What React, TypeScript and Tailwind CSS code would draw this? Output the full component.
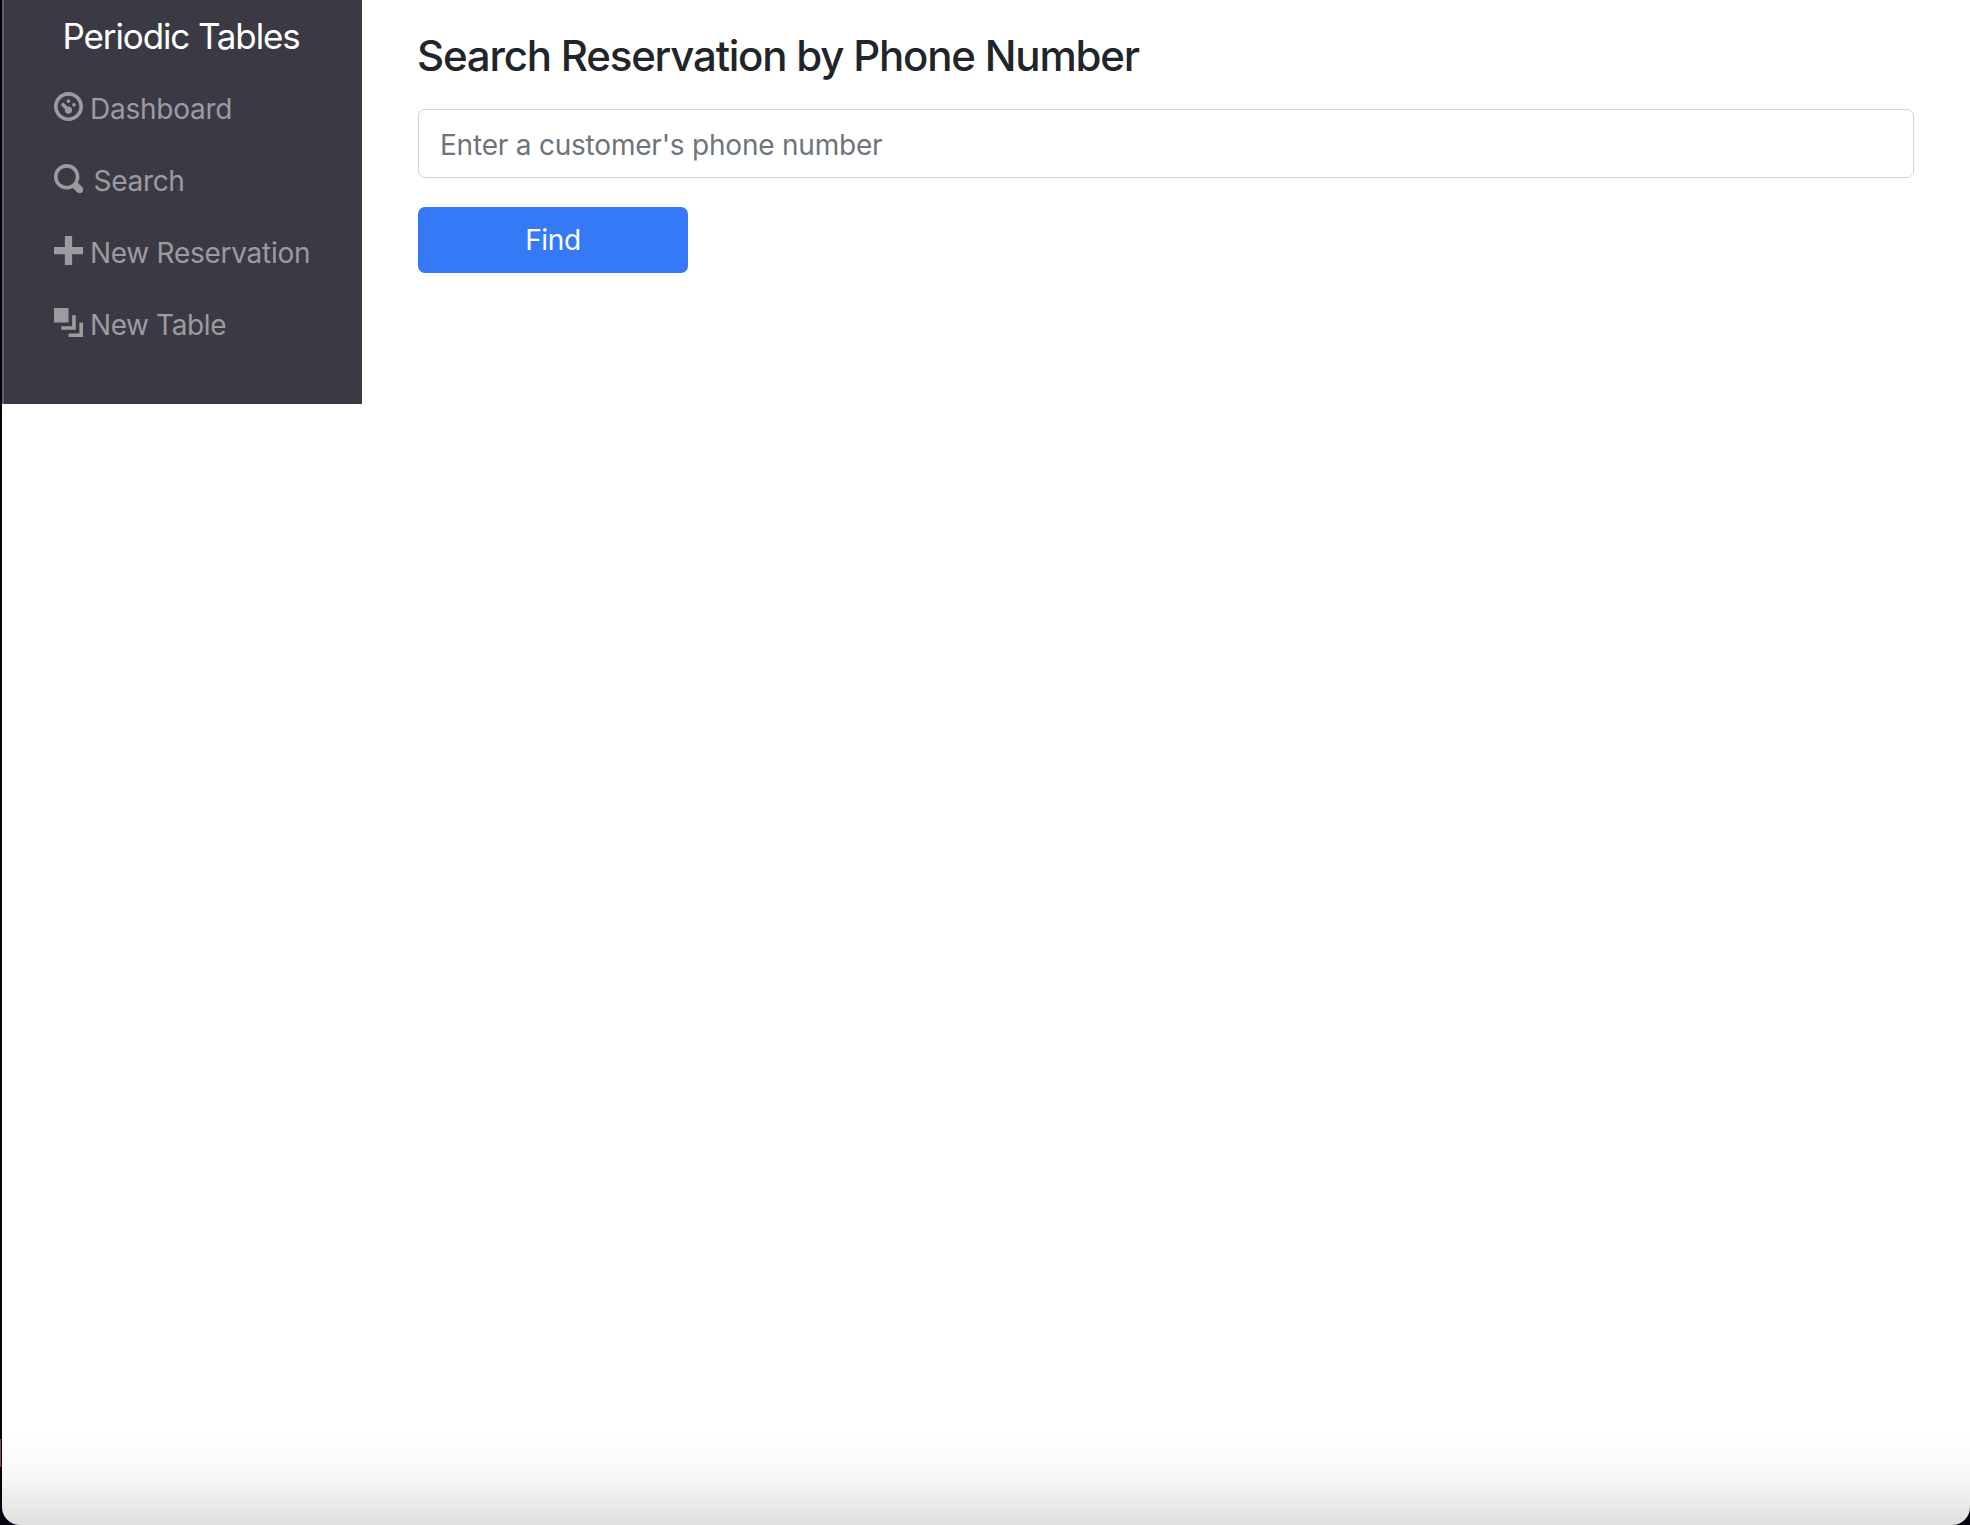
const navItems = [
  {
    label: 'Dashboard',
    text: 'ml-[7px] tracking-[-0.24px]',
    path: 'M4 0c-2.2 0-4 1.8-4 4s1.8 4 4 4 4-1.8 4-4-1.8-4-4-4zm0 1c1.66 0 3 1.34 3 3s-1.34 3-3 3-3-1.34-3-3 1.34-3 3-3zm0 1c-.28 0-.5.22-.5.5s.22.5.5.5.5-.22.5-.5-.22-.5-.5-.5zm-1.66 1a.5.5 0 0 0-.19.84l.91.91c-.02.08-.06.16-.06.25 0 .55.45 1 1 1s1-.45 1-1-.45-1-1-1c-.09 0-.17.04-.25.06l-.91-.91a.5.5 0 0 0-.44-.16.5.5 0 0 0-.06 0zm3.16 0c-.28 0-.5.22-.5.5s.22.5.5.5.5-.22.5-.5-.22-.5-.5-.5z',
  },
  {
    label: 'Search',
    text: 'ml-[10.5px] tracking-[-0.3px]',
    path: 'M3.5 0c-1.93 0-3.5 1.57-3.5 3.5s1.57 3.5 3.5 3.5c.59 0 1.17-.14 1.66-.41a1 1 0 0 0 .13.13l1 1a1.02 1.02 0 1 0 1.44-1.44l-1-1a1 1 0 0 0-.16-.13c.27-.49.44-1.06.44-1.66 0-1.93-1.55-3.5-3.5-3.5zm0 1c1.39 0 2.5 1.11 2.5 2.5 0 .66-.24 1.27-.66 1.72l-.03.03a1 1 0 0 0-.13.13c-.44.4-1.04.63-1.69.63-1.39 0-2.5-1.11-2.5-2.5s1.11-2.5 2.5-2.5z',
  },
  {
    label: 'New Reservation',
    text: 'ml-[7px] tracking-[-0.27px]',
    path: 'M3 0v3h-3v2h3v3h2v-3h3v-2h-3v-3h-2z',
  },
  {
    label: 'New Table',
    text: 'ml-[7px] tracking-[-0.4px]',
    path: 'M0 0v4h4v-4h-4zm5 2v3h-3v1h4v-4h-1zm2 2v3h-3v1h4v-4h-1z',
  },
];

function Sidebar() {
  return (
    <nav className="h-[404px] w-[360px] shrink-0 border-l-2 border-[#5f5e66] bg-[#3b3a44]">
      <div className="flex h-[72px] items-center pl-[58.5px] text-[35px] tracking-[-1.12px] whitespace-nowrap text-white">
        Periodic Tables
      </div>
      <ul className="text-[28px] leading-[72px] text-[#9b9ca0]">
        {navItems.map((item) => (
          <li key={item.label} className="flex h-[72px] items-center pl-[50px] whitespace-nowrap">
            <svg viewBox="0 0 8 8" className="-mt-[3px] size-[29px] shrink-0 fill-current">
              <path d={item.path} />
            </svg>
            <span className={`pt-[2px] ${item.text}`}>{item.label}</span>
          </li>
        ))}
      </ul>
    </nav>
  );
}

export default function App() {
  return (
    <div className="flex h-[1525px] w-[1970px] overflow-hidden bg-[#07030f] font-[Inter,sans-serif]">
      <div className="w-px shrink-0 pt-[1439px]">
        <div className="h-[28px] bg-[#8a4a4c]" />
      </div>
      <div className="ml-px flex h-full flex-1 items-start overflow-hidden rounded-b-[18px] bg-white bg-linear-to-b from-white from-[1430px] via-[#f8f8f8] via-[1475px] to-[#e0e0e0]">
        <Sidebar />
        <main className="flex-1 pr-[56px] pl-[56px]">
          <h1 className="mt-[30px] -ml-px h-[51px] text-[42px] leading-[52px] font-medium tracking-[-1.2px] whitespace-nowrap text-[#212529]">
            Search Reservation by Phone Number
          </h1>
          <form className="mt-[28px]">
            <input
              type="text"
              placeholder="Enter a customer's phone number"
              className="block h-[69px] w-full rounded-[7px] border border-[#ced4da] bg-white px-[21px] pt-[2px] text-[28px] tracking-[-0.21px] placeholder:text-[#6c757d]"
            />
            <button
              type="button"
              className="mt-[29px] block h-[66px] w-[270px] rounded-[7px] bg-[#3579f6] text-[28px] tracking-[-0.35px] text-white"
            >
              Find
            </button>
          </form>
        </main>
      </div>
    </div>
  );
}
